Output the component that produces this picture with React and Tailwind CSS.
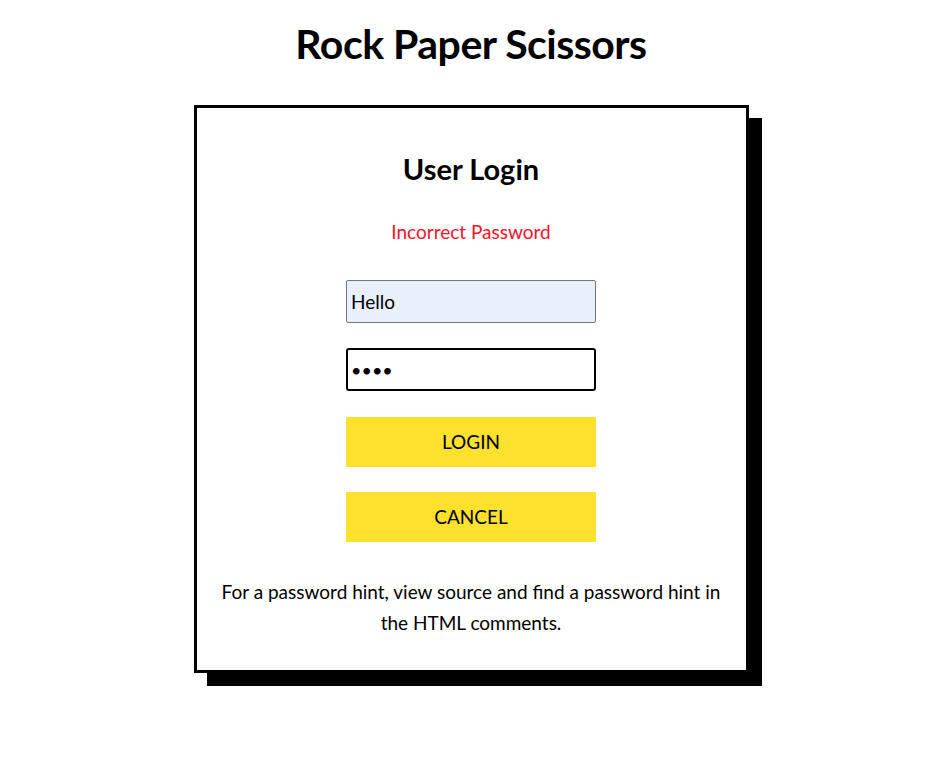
export default function App() {
  return (
    <div className="min-h-[760px] bg-white pt-[18px] pl-[13px] font-['Lato',sans-serif] text-black">
      <h1 className="text-center text-[41px] leading-[52px] font-bold tracking-[-0.5px]">
        Rock Paper Scissors
      </h1>

      <div className="mx-auto mt-[35px] w-[555px] border-[3px] border-black bg-white px-[20px] pt-[42px] pb-[32px] shadow-[13px_13px_0_#000]">
        <h2 className="text-center text-[29px] leading-[37px] font-bold">User Login</h2>
        <p className="mt-[33px] text-center text-[19px] leading-[24px] text-[#f5122b]">
          Incorrect Password
        </p>

        <form className="mt-[36px] flex flex-col items-center" onSubmit={(e) => e.preventDefault()}>
          <input
            type="text"
            defaultValue="Hello"
            className="h-[43px] w-[250px] rounded-[2px] border border-[#767676] bg-[#e8f0fe] px-[4px] text-[19px] outline-none"
          />
          <input
            type="password"
            defaultValue="pass"
            className="mt-[25px] h-[43px] w-[250px] rounded-[3px] border-2 border-black bg-white px-[3px] text-[18px] outline-none [-webkit-text-security:square]"
          />
          <button
            type="submit"
            className="mt-[26px] h-[50px] w-[250px] bg-[#fde12d] text-[19px] uppercase"
          >
            Login
          </button>
          <button
            type="button"
            className="mt-[25px] h-[50px] w-[250px] bg-[#fde12d] text-[19px] uppercase"
          >
            Cancel
          </button>
        </form>

        <p className="mt-[34px] text-center text-[19px] leading-[31px]">
          For a password hint, view source and find a password hint in the HTML comments.
        </p>
      </div>
    </div>
  );
}
